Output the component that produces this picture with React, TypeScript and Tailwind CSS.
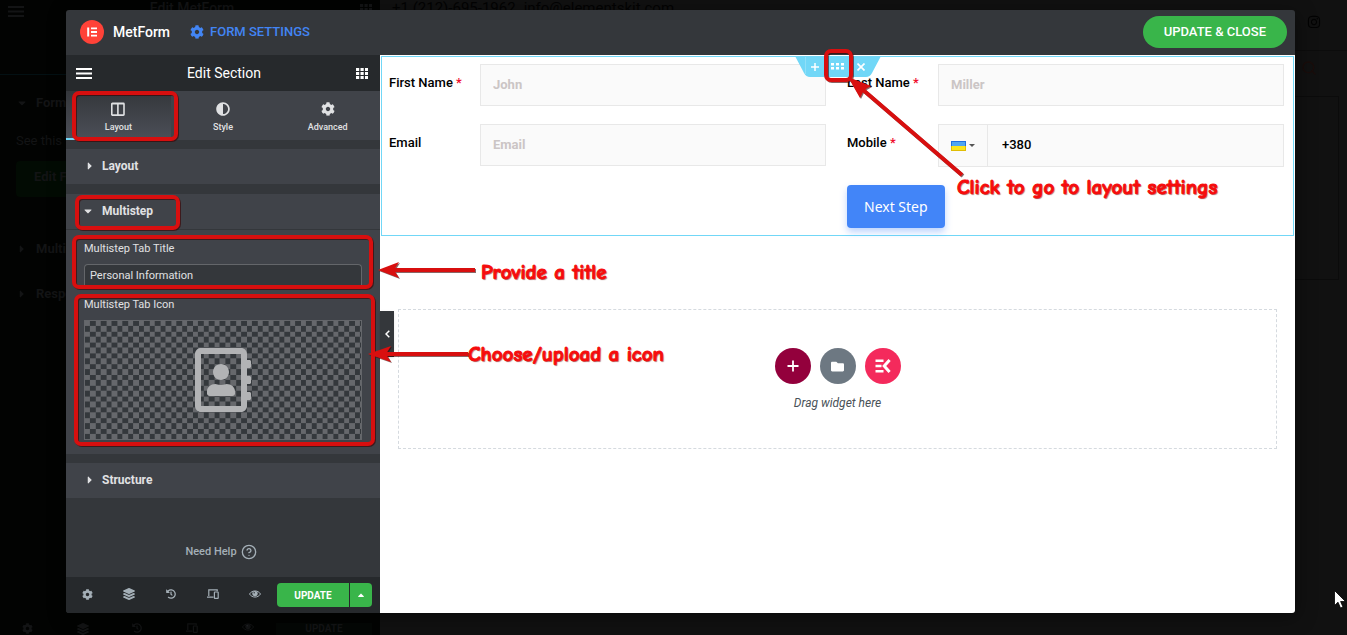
import { FaRegAddressBook, FaCaretDown, FaCaretRight, FaCaretUp, FaCog, FaLayerGroup, FaHistory, FaInstagram, FaAdjust, FaFolder } from "react-icons/fa";
import { Search, CircleHelp } from "lucide-react";
import type { ReactNode } from "react";

function GridIcon({ className }: { className?: string }) {
  return (
    <svg viewBox="0 0 12 11" className={className} fill="currentColor" aria-hidden="true">
      {[0, 4, 8].map((y) =>
        [0, 4.5, 9].map((x) => <rect key={`${x}-${y}`} x={x} y={y} width="3.2" height="3" />)
      )}
    </svg>
  );
}

function MenuIcon({ className }: { className?: string }) {
  return (
    <svg viewBox="0 0 16 11" className={className} fill="currentColor" aria-hidden="true">
      <rect y="0" width="16" height="2" />
      <rect y="4.5" width="16" height="2" />
      <rect y="9" width="16" height="2" />
    </svg>
  );
}

function ColumnsIcon() {
  return (
    <svg viewBox="0 0 14 14" className="size-3.5" fill="none" stroke="currentColor" strokeWidth="1.6" aria-hidden="true">
      <rect x="0.8" y="1.3" width="12.2" height="11.8" rx="0.6" />
      <path d="M0.8 1.8h12.2M6.9 1.3v11.8" />
    </svg>
  );
}

function DevicesIcon() {
  return (
    <svg viewBox="0 0 12 10" className="h-2.5 w-3" fill="none" stroke="currentColor" strokeWidth="1.2" aria-hidden="true">
      <path d="M1.8 7V0.9h8.4v1.3M0 8.2h6.5" />
      <rect x="7.4" y="3" width="3.8" height="6.3" rx="0.4" />
    </svg>
  );
}

function EyeIcon() {
  return (
    <svg viewBox="0 0 12 8" className="h-2 w-3" aria-hidden="true">
      <path d="M0.5 4C3 -0.1 9 -0.1 11.5 4C9 8.1 3 8.1 0.5 4Z" fill="none" stroke="currentColor" strokeWidth="1" />
      <circle cx="6" cy="3.6" r="2.7" fill="currentColor" />
      <circle cx="5.2" cy="2.8" r="0.7" fill="#26292c" />
    </svg>
  );
}

function FooterTools() {
  return (
    <>
      <button type="button" aria-label="Settings" className="flex w-[42px] items-center justify-center"><FaCog className="size-[11px]" /></button>
      <button type="button" aria-label="Navigator" className="flex w-[42px] items-center justify-center"><FaLayerGroup className="size-3" /></button>
      <button type="button" aria-label="History" className="flex w-[42px] items-center justify-center"><FaHistory className="size-2.5" /></button>
      <button type="button" aria-label="Responsive mode" className="flex w-[42px] items-center justify-center"><DevicesIcon /></button>
      <button type="button" aria-label="Preview" className="flex w-[42px] items-center justify-center"><EyeIcon /></button>
    </>
  );
}

function Backdrop() {
  return (
    <div className="absolute inset-0 flex overflow-hidden bg-[#111111]" aria-hidden="true">
      <div className="flex w-[380px] shrink-0 flex-col bg-[#020302] text-[#131415]">
        <div className="flex h-[75px] items-start justify-between border-b border-[#031013] px-2 text-sm font-medium">
          <MenuIcon className="mt-[6px] h-[11px] w-4" />
          <span className="leading-4">Edit MetForm</span>
          <GridIcon className="mt-1 h-[11px] w-3" />
        </div>
        <div className="flex flex-col px-4 pt-[18px] text-[13px]">
          <div className="flex items-center gap-2 leading-5 font-bold"><FaCaretDown className="size-3" />Form</div>
          <div className="mt-[18px] leading-5">See this video</div>
          <div className="mt-2.5 flex h-9 w-40 items-center rounded-sm bg-[#020b03] pb-1 pl-[18px] font-bold">Edit Form</div>
          <div className="mt-[42px] flex items-center gap-2 leading-5 font-bold"><FaCaretRight className="size-3" />Multistep</div>
          <div className="mt-[25px] flex items-center gap-2 leading-5 font-bold"><FaCaretRight className="size-3" />Response</div>
        </div>
        <div className="mt-auto flex h-3 items-center">
          <div className="flex w-[276px] justify-around"><FaCog className="size-[11px]" /><FaLayerGroup className="size-3" /><FaHistory className="size-2.5" /><DevicesIcon /><EyeIcon /></div>
          <span className="mr-2 flex h-3 flex-1 items-center justify-center bg-[#040705] text-[10px] leading-3 font-bold">UPDATE</span>
        </div>
      </div>
      <div className="flex min-w-0 flex-1 flex-col text-[#030303]">
        <div className="flex h-[51px] items-start justify-between border-b border-[#0c0c0c] pr-[26px] pl-3">
          <span className="flex gap-2 text-[15px] leading-[17px]"><span>+1 (212)-695-1962</span><span>info@elementskit.com</span></span>
          <FaInstagram className="mt-[15px] size-3.5" />
        </div>
        <div className="flex justify-end pt-[9px] pr-[30px]"><Search className="size-4 text-[#1a0d0b]" /></div>
        <div className="mt-5 mr-2 h-[184px] border border-[#0b0b0b] p-4" />
      </div>
    </div>
  );
}

function PanelTab({ label, active, children }: { label: string; active?: boolean; children: ReactNode }) {
  return (
    <button
      type="button"
      className={
        active
          ? "flex flex-1 flex-col items-center gap-[5px] border-b-2 border-[#71d7f7] bg-linear-to-b from-[#34373b] to-[#4b4e57] pt-[11px]"
          : "flex flex-1 flex-col items-center gap-[5px] border-b-2 border-transparent pt-[11px]"
      }
    >
      {children}
      <span className="text-[9px] leading-3 font-medium">{label}</span>
    </button>
  );
}

function SectionTitle({ label, open }: { label: string; open?: boolean }) {
  return (
    <button type="button" className="flex h-[35px] w-full items-center bg-[#404349] pb-0.5 pl-4 text-xs font-bold text-[#e0e1e3]">
      <span className="flex w-5">{open ? <FaCaretDown className="size-3" /> : <FaCaretRight className="ml-0.5 size-3" />}</span>
      {label}
    </button>
  );
}

function AddressPreview() {
  return (
    <button type="button" aria-label="Choose icon" className="relative mt-[5px] flex h-[120px] w-full items-center justify-center border border-[#64666a]">
      <svg className="absolute inset-0 size-full" shapeRendering="crispEdges" aria-hidden="true">
        <defs>
          <pattern id="checker" width="10.8" height="10.8" patternUnits="userSpaceOnUse">
            <rect width="10.8" height="10.8" fill="#66686c" />
            <path d="M5.4 0h5.4v5.4H5.4zM0 5.4h5.4v5.4H0z" fill="#34383c" />
          </pattern>
        </defs>
        <rect width="100%" height="100%" fill="url(#checker)" />
      </svg>
      <FaRegAddressBook className="relative size-16 text-[#b2b3b5]" />
    </button>
  );
}

function Sidebar() {
  return (
    <aside className="flex w-[314px] shrink-0 flex-col bg-[#34373b] text-[#e0e1e3]">
      <div className="flex h-9 items-center justify-between bg-[#26292c] pr-3 pl-2.5 text-white">
        <button type="button" aria-label="Menu"><MenuIcon className="h-[11px] w-4" /></button>
        <h2 className="text-sm">Edit Section</h2>
        <button type="button" aria-label="Widgets"><GridIcon className="h-[11px] w-3" /></button>
      </div>
      <div className="flex h-[49px] bg-[#404349]">
        <PanelTab label="Layout" active><ColumnsIcon /></PanelTab>
        <PanelTab label="Style"><FaAdjust className="size-3.5" /></PanelTab>
        <PanelTab label="Advanced"><FaCog className="size-3.5" /></PanelTab>
      </div>
      <div className="mt-[9px] flex flex-col">
        <SectionTitle label="Layout" />
        <section className="mt-2.5 mb-[9px] bg-[#404349]">
          <SectionTitle label="Multistep" open />
          <div className="border-t border-[#34373b] px-[18px] pt-[9px] pb-3.5 text-[11px] leading-5">
            <label htmlFor="tab-title" className="block">Multistep Tab Title</label>
            <input
              id="tab-title"
              defaultValue="Personal Information"
              className="mt-[5px] block h-[22px] w-full rounded-t-sm border border-b-0 border-[#64666a] bg-[#34373b] px-[5px] text-[11px] outline-none"
            />
            <div className="mt-[9px]">Multistep Tab Icon</div>
            <AddressPreview />
          </div>
        </section>
        <SectionTitle label="Structure" />
      </div>
      <div className="flex flex-1 items-center justify-center pt-[29px] pr-1 text-[11px] font-medium text-[#a4afb7]">
        <a href="#help" className="flex items-center gap-1">Need Help<CircleHelp className="size-4" /></a>
      </div>
      <div className="flex h-9 items-center justify-between bg-[#26292c] pr-2 text-[#a4afb7]">
        <div className="flex pb-0.5"><FooterTools /></div>
        <div className="flex h-6 gap-px text-white">
          <button type="button" className="w-[72px] rounded-l-sm bg-[#39b54a] text-[10px] font-bold">UPDATE</button>
          <button type="button" aria-label="Save options" className="flex w-[22px] items-center justify-center rounded-r-sm bg-[#39b54a]"><FaCaretUp className="size-2.5" /></button>
        </div>
      </div>
    </aside>
  );
}

function Field({ id, label, placeholder, required }: { id: string; label: string; placeholder: string; required?: boolean }) {
  return (
    <div className="flex">
      <FieldLabel id={id} label={label} required={required} />
      <input
        id={id}
        placeholder={placeholder}
        className="h-[42px] min-w-0 flex-1 border border-[#e8e8e8] bg-[#fafafa] px-3 pb-0.5 text-[13px] font-bold outline-none placeholder:text-[#cbc5c5]"
      />
    </div>
  );
}

function FieldLabel({ id, label, required }: { id: string; label: string; required?: boolean }) {
  return (
    <label htmlFor={id} className="w-[91px] shrink-0 pt-[9px] text-[13px] leading-5 font-medium text-black">
      {label} {required && <span className="text-[#f00a2a]">*</span>}
    </label>
  );
}

function SectionHandle() {
  return (
    <div className="absolute -top-px left-1/2 h-[21px] w-[86px] -translate-x-1/2 text-white">
      <svg viewBox="0 0 86 21" className="absolute inset-0 size-full" aria-hidden="true">
        <path d="M0 0H86L77 17Q75 21 71 21H15Q11 21 9 17Z" fill="#71d7f7" />
        <path d="M10.500 1v17" stroke="#8fdff8" />
      </svg>
      <div className="relative flex h-full items-center justify-center">
        <button type="button" aria-label="Add section" className="flex w-[23px] justify-center">
          <svg viewBox="0 0 8 8" className="size-2" stroke="currentColor" strokeWidth="1.5"><path d="M4 0v8M0 4h8" /></svg>
        </button>
        <button type="button" aria-label="Edit section" className="flex w-[23px] justify-center">
          <svg viewBox="0 0 13 7" className="h-[7px] w-[13px]" fill="currentColor">
            {[0, 5, 10].map((x) => <path key={x} d={`M${x} 0h3v2.500h-3zM${x} 4h3v2.500h-3z`} />)}
          </svg>
        </button>
        <button type="button" aria-label="Delete section" className="flex w-[23px] justify-center">
          <svg viewBox="0 0 8 8" className="size-2" stroke="currentColor" strokeWidth="1.7"><path d="M0.500 0.500l7 7M7.500 0.500l-7 7" /></svg>
        </button>
      </div>
    </div>
  );
}

function Canvas() {
  return (
    <main className="relative flex min-w-0 flex-1 flex-col bg-white pt-px pl-px">
      <section className="relative mr-px grid h-[180px] grid-cols-2 gap-x-[21px] border border-[#71d7f7] pt-[7px] pr-[9px] pl-[7px]">
        <div className="flex flex-col gap-[18px]">
          <Field id="first-name" label="First Name" placeholder="John" required />
          <Field id="email" label="Email" placeholder="Email" />
        </div>
        <div className="flex flex-col items-start gap-[18px] *:w-full">
          <Field id="last-name" label="Last Name" placeholder="Miller" required />
          <div className="flex">
            <FieldLabel id="mobile" label="Mobile" required />
            <div className="flex h-[43px] min-w-0 flex-1 border border-[#e8e8e8] bg-[#fafafa]">
              <button type="button" aria-label="Country" className="flex w-[49px] items-center justify-center gap-[3px] border-r border-[#e8e8e8]">
                <svg viewBox="0 0 15 10" className="h-2.5 w-[15px]" aria-hidden="true">
                  <path d="M0 0h15v5H0z" fill="#1f6fe0" />
                  <path d="M1 1h13v4H1z" fill="#4fa6f2" />
                  <path d="M0 5h15v5H0z" fill="#e0bd05" />
                  <path d="M1 5h13v4H1z" fill="#fbe51c" />
                </svg>
                <svg viewBox="0 0 6 3" className="h-[3px] w-1.5" fill="#555" aria-hidden="true"><path d="M0 0h6L3 3z" /></svg>
              </button>
              <input id="mobile" type="tel" defaultValue="+380" className="min-w-0 flex-1 px-3.5 pb-0.5 text-[13px] font-medium text-black outline-none" />
            </div>
          </div>
          <div className="flex">
            <button type="button" className="h-[43px] rounded bg-[#4285f8] px-[17px] font-['Noto_Sans',sans-serif] text-sm text-white shadow-[0_4px_7px_rgba(66,133,248,0.35)]">Next Step</button>
          </div>
        </div>
        <SectionHandle />
      </section>
      <div className="mt-[73px] mr-[18px] ml-[17px] flex h-[140px] flex-col items-center border border-dashed border-[#d5dadf] pt-[38px]">
        <div className="flex gap-[9px] text-white">
          <button type="button" aria-label="Add new section" className="flex size-9 items-center justify-center rounded-full bg-[#93003c]">
            <svg viewBox="0 0 12 12" className="size-3" stroke="currentColor" strokeWidth="1.8"><path d="M6 0.500v11M0.500 6h11" /></svg>
          </button>
          <button type="button" aria-label="Add template" className="flex size-9 items-center justify-center rounded-full bg-[#6d7882]"><FaFolder className="size-[13px]" /></button>
          <button type="button" aria-label="ElementsKit library" className="flex size-9 items-center justify-center rounded-full bg-[#f42a5c]">
            <svg viewBox="0 0 16 14" className="h-3.5 w-4" fill="none" stroke="currentColor" strokeWidth="2.500" aria-hidden="true">
              <path d="M0.500 1.800h8M0.500 7h6M0.500 12.200h8" />
              <path d="M14.600 1L9.200 7l5.400 6" strokeWidth="3" />
            </svg>
          </button>
        </div>
        <p className="mt-[9px] text-xs leading-5 text-[#495157] italic">Drag widget here</p>
      </div>
      <button type="button" aria-label="Collapse panel" className="absolute top-[256px] left-0 flex h-[46px] w-3.5 items-center justify-center bg-[#34373b] text-white shadow">
        <svg viewBox="0 0 5 8" className="h-2 w-[5px]" fill="none" stroke="currentColor" strokeWidth="1.500"><path d="M4.300 0.700L1 4l3.300 3.300" /></svg>
      </button>
    </main>
  );
}

function Annotations() {
  const boxes = [
    [74, 93, 102, 46],
    [77, 197, 101, 31],
    [74, 237, 297, 50],
    [76, 296, 297, 148],
    [826, 51, 25, 29],
  ];
  return (
    <div className="pointer-events-none absolute inset-0">
      <svg className="absolute inset-0 size-full drop-shadow-[1px_1px_0px_rgba(60,0,0,0.6)]" aria-hidden="true">
        {boxes.map(([x, y, w, h]) => (
          <rect key={`${x}-${y}`} x={x} y={y} width={w} height={h} rx="5" fill="none" stroke="#d80f0f" strokeWidth="4" />
        ))}
        <g stroke="#d80f0f" strokeWidth="4" fill="#d80f0f">
          <path d="M475 270H394M468 354H386M962 175L862 89" fill="none" />
          <path stroke="none" d="M378 270L399 262L394 270L399 278ZM368 354L391 346L386 354L391 362ZM848 77L871 86L864 90L860 98Z" />
        </g>
      </svg>
      <Note className="absolute top-[175px] left-[957px]">Click to go to layout settings</Note>
      <Note className="absolute top-[260px] left-[481px]">Provide a title</Note>
      <Note className="absolute top-[342px] left-[468px]">Choose/upload a icon</Note>
      <svg viewBox="0 0 12 19" className="absolute top-[590px] left-[1334px] h-[19px] w-3" aria-hidden="true">
        <path d="M0.500 0.500V15.500L4 12.200L6.500 18L9 17L6.600 11.500H11.500Z" fill="#fff" stroke="#000" strokeWidth="0.800" />
      </svg>
    </div>
  );
}

function Note({ className, children }: { className: string; children: ReactNode }) {
  return (
    <span className={`${className} font-['Comic_Sans_MS','Comic_Neue',Lato,sans-serif] text-[21px] leading-6 font-black whitespace-nowrap text-[#f60c0c] [-webkit-text-stroke:1px_#f60c0c] [text-shadow:1px_1px_1px_rgba(80,0,0,0.6)]`}>
      {children}
    </span>
  );
}

export default function App() {
  return (
    <div className="relative flex min-h-screen flex-col overflow-hidden bg-[#111111] font-[Roboto,sans-serif]">
      <Backdrop />
      <div className="relative mt-2.5 mr-[52px] mb-[22px] ml-[66px] flex flex-1 flex-col overflow-hidden rounded-[3px] shadow-[2px_4px_20px_rgba(0,0,0,0.4)]">
        <header className="flex h-[45px] items-center bg-[#34373b] pr-2 pb-px pl-3.5">
          <svg viewBox="0 0 24 24" className="size-6" aria-hidden="true">
            <circle cx="12" cy="12" r="12" fill="#ff4238" />
            <path d="M7.200 7.500h2v9h-2zM11 7.500h6v1.800h-6zM11 11.100h6v1.800h-6zM11 14.700h6v1.800h-6z" fill="#fff" />
          </svg>
          <h1 className="ml-[9px] text-sm font-medium text-white">MetForm</h1>
          <button type="button" className="ml-5 flex items-center gap-1.5 text-[13px] font-medium text-[#4285f4]"><FaCog className="size-3.5" />FORM SETTINGS</button>
          <button type="button" className="ml-auto h-8 rounded-full bg-[#39b54a] px-[21px] text-[13px] font-medium text-white">UPDATE &amp; CLOSE</button>
        </header>
        <div className="flex flex-1">
          <Sidebar />
          <Canvas />
        </div>
      </div>
      <Annotations />
    </div>
  );
}
